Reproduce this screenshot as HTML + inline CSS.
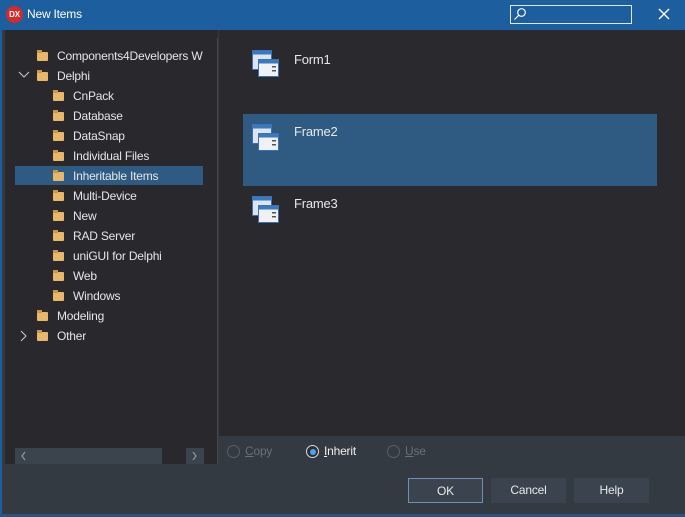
<!DOCTYPE html>
<html><head><style>
*{margin:0;padding:0;box-sizing:border-box}
body{width:685px;height:517px;overflow:hidden;background:#333a42;font-family:"Liberation Sans",sans-serif;font-size:12px;color:#e8e8e8;position:relative;letter-spacing:-0.2px}
.abs{position:absolute}
.title{left:0;top:0;width:685px;height:30px;background:#1c5e9e}
.tree{left:5px;top:30px;width:213px;height:434px;background:#29292d}
.right{left:219px;top:30px;width:466px;height:406px;background:#2a2a2e}
.div{left:217px;top:38px;width:1px;height:426px;background:#45454a}
.ti{position:absolute;height:18px;line-height:18px;font-size:12px;color:#e6e6e6}
.fold{position:absolute;width:11px;height:9px;background:#e8b86a;border-radius:1px}
.fold:before{content:"";position:absolute;left:0;top:-2px;width:5px;height:3px;background:#c9974d}
.btn{position:absolute;top:478px;height:25px;background:#3b444e;line-height:25px;text-align:center;color:#e8e8e8}
.radio{position:absolute;width:13px;height:13px;border-radius:50%;border:1px solid #5a6068}
.icon{position:absolute;width:28px;height:32px}
</style></head><body>
<div class="abs" style="left:0;top:30px;width:2px;height:487px;background:#1c5e9e"></div>
<div class="abs title"></div>
<div class="abs" style="left:6px;top:6px;width:17px;height:17px;border-radius:50%;background:#d62a2a;color:#fff;font-size:8px;font-weight:bold;line-height:17px;text-align:center">DX</div>
<div class="abs" style="left:27px;top:7px;color:#fff;font-size:12px">New Items</div>
<div class="abs" style="left:510px;top:5px;width:122px;height:19px;border:1px solid #dfe8f0"></div>
<svg class="abs" style="left:513px;top:7px" width="14" height="14"><circle cx="8.5" cy="5.5" r="3.8" fill="none" stroke="#fff" stroke-width="1.2"/><line x1="5.8" y1="8.2" x2="1.5" y2="12.5" stroke="#fff" stroke-width="1.2"/></svg>
<svg class="abs" style="left:658px;top:8px" width="12" height="12"><path d="M1 1L11 11M11 1L1 11" stroke="#fff" stroke-width="1.4"/></svg>
<div class="abs tree"></div>
<div class="abs right"></div>
<div class="abs div"></div>
<div class="abs" style="left:15px;top:166px;width:188px;height:19px;background:#2f5b83"></div>

<div class="fold" style="left:37px;top:52px"></div><div class="ti" style="left:57px;top:47px">Components4Developers W</div>
<svg class="abs" style="left:18px;top:71px" width="12" height="8"><path d="M1 1L6 6L11 1" stroke="#ccc" fill="none"/></svg>
<div class="fold" style="left:37px;top:72px"></div><div class="ti" style="left:57px;top:67px">Delphi</div>
<div class="fold" style="left:53px;top:92px"></div><div class="ti" style="left:73px;top:87px">CnPack</div>
<div class="fold" style="left:53px;top:112px"></div><div class="ti" style="left:73px;top:107px">Database</div>
<div class="fold" style="left:53px;top:132px"></div><div class="ti" style="left:73px;top:127px">DataSnap</div>
<div class="fold" style="left:53px;top:152px"></div><div class="ti" style="left:73px;top:147px">Individual Files</div>
<div class="fold" style="left:53px;top:172px"></div><div class="ti" style="left:73px;top:167px">Inheritable Items</div>
<div class="fold" style="left:53px;top:192px"></div><div class="ti" style="left:73px;top:187px">Multi-Device</div>
<div class="fold" style="left:53px;top:212px"></div><div class="ti" style="left:73px;top:207px">New</div>
<div class="fold" style="left:53px;top:232px"></div><div class="ti" style="left:73px;top:227px">RAD Server</div>
<div class="fold" style="left:53px;top:252px"></div><div class="ti" style="left:73px;top:247px">uniGUI for Delphi</div>
<div class="fold" style="left:53px;top:272px"></div><div class="ti" style="left:73px;top:267px">Web</div>
<div class="fold" style="left:53px;top:292px"></div><div class="ti" style="left:73px;top:287px">Windows</div>
<div class="fold" style="left:37px;top:312px"></div><div class="ti" style="left:57px;top:307px">Modeling</div>
<svg class="abs" style="left:20px;top:330px" width="8" height="12"><path d="M1 1L6 6L1 11" stroke="#ccc" fill="none"/></svg>
<div class="fold" style="left:37px;top:332px"></div><div class="ti" style="left:57px;top:327px">Other</div>

<div class="abs" style="left:15px;top:448px;width:147px;height:16px;background:#3b434c"></div>
<div class="abs" style="left:186px;top:448px;width:18px;height:16px;background:#3b434c"></div>
<svg class="abs" style="left:20px;top:451px" width="8" height="10"><path d="M5 1L2 5L5 9" stroke="#8a929a" fill="none" stroke-width="1.3"/></svg>
<svg class="abs" style="left:191px;top:451px" width="8" height="10"><path d="M2 1L5 5L2 9" stroke="#8a929a" fill="none" stroke-width="1.3"/></svg>

<div class="abs" style="left:243px;top:114px;width:414px;height:72px;background:#2f5b83"></div>
<svg width="0" height="0" style="position:absolute"><defs><g id="fi"><rect x="0.5" y="0.5" width="19" height="19" fill="#dfe4ec" stroke="#3a6fb0"/><rect x="0.5" y="0.5" width="19" height="4" fill="#3a78c0"/><rect x="6.5" y="9.5" width="20" height="17" fill="#eef1f5" stroke="#3a6fb0"/><rect x="6.5" y="9.5" width="20" height="4" fill="#3a78c0"/><rect x="20" y="16" width="4" height="1.5" fill="#555"/><rect x="20" y="20" width="4" height="1.5" fill="#555"/></g></defs></svg>
<svg class="icon" style="left:252px;top:50px"><use href="#fi"/></svg>
<div class="abs" style="left:294px;top:52px;font-size:13px">Form1</div>
<svg class="icon" style="left:252px;top:124px"><use href="#fi"/></svg>
<div class="abs" style="left:294px;top:124px;font-size:13px">Frame2</div>
<svg class="icon" style="left:252px;top:196px"><use href="#fi"/></svg>
<div class="abs" style="left:294px;top:196px;font-size:13px">Frame3</div>

<div class="radio" style="left:227px;top:445px"></div><div class="abs" style="left:245px;top:444px;color:#6a7078"><u>C</u>opy</div>
<div class="radio" style="left:306px;top:445px;border:1px solid #ddd;background:#2a3038"></div><div class="abs" style="left:310px;top:449px;width:6px;height:6px;border-radius:50%;background:#4fa3e8"></div>
<div class="abs" style="left:324px;top:444px;color:#eee"><u>I</u>nherit</div>
<div class="radio" style="left:387px;top:445px"></div><div class="abs" style="left:405px;top:444px;color:#6a7078"><u>U</u>se</div>

<div class="btn" style="left:408px;width:75px;border:1px solid #6f8fb0">OK</div>
<div class="btn" style="left:491px;width:75px">Cancel</div>
<div class="btn" style="left:574px;width:75px">Help</div>
<div class="abs" style="left:0;top:514px;width:685px;height:3px;background:#2a5580"></div>
</body></html>
